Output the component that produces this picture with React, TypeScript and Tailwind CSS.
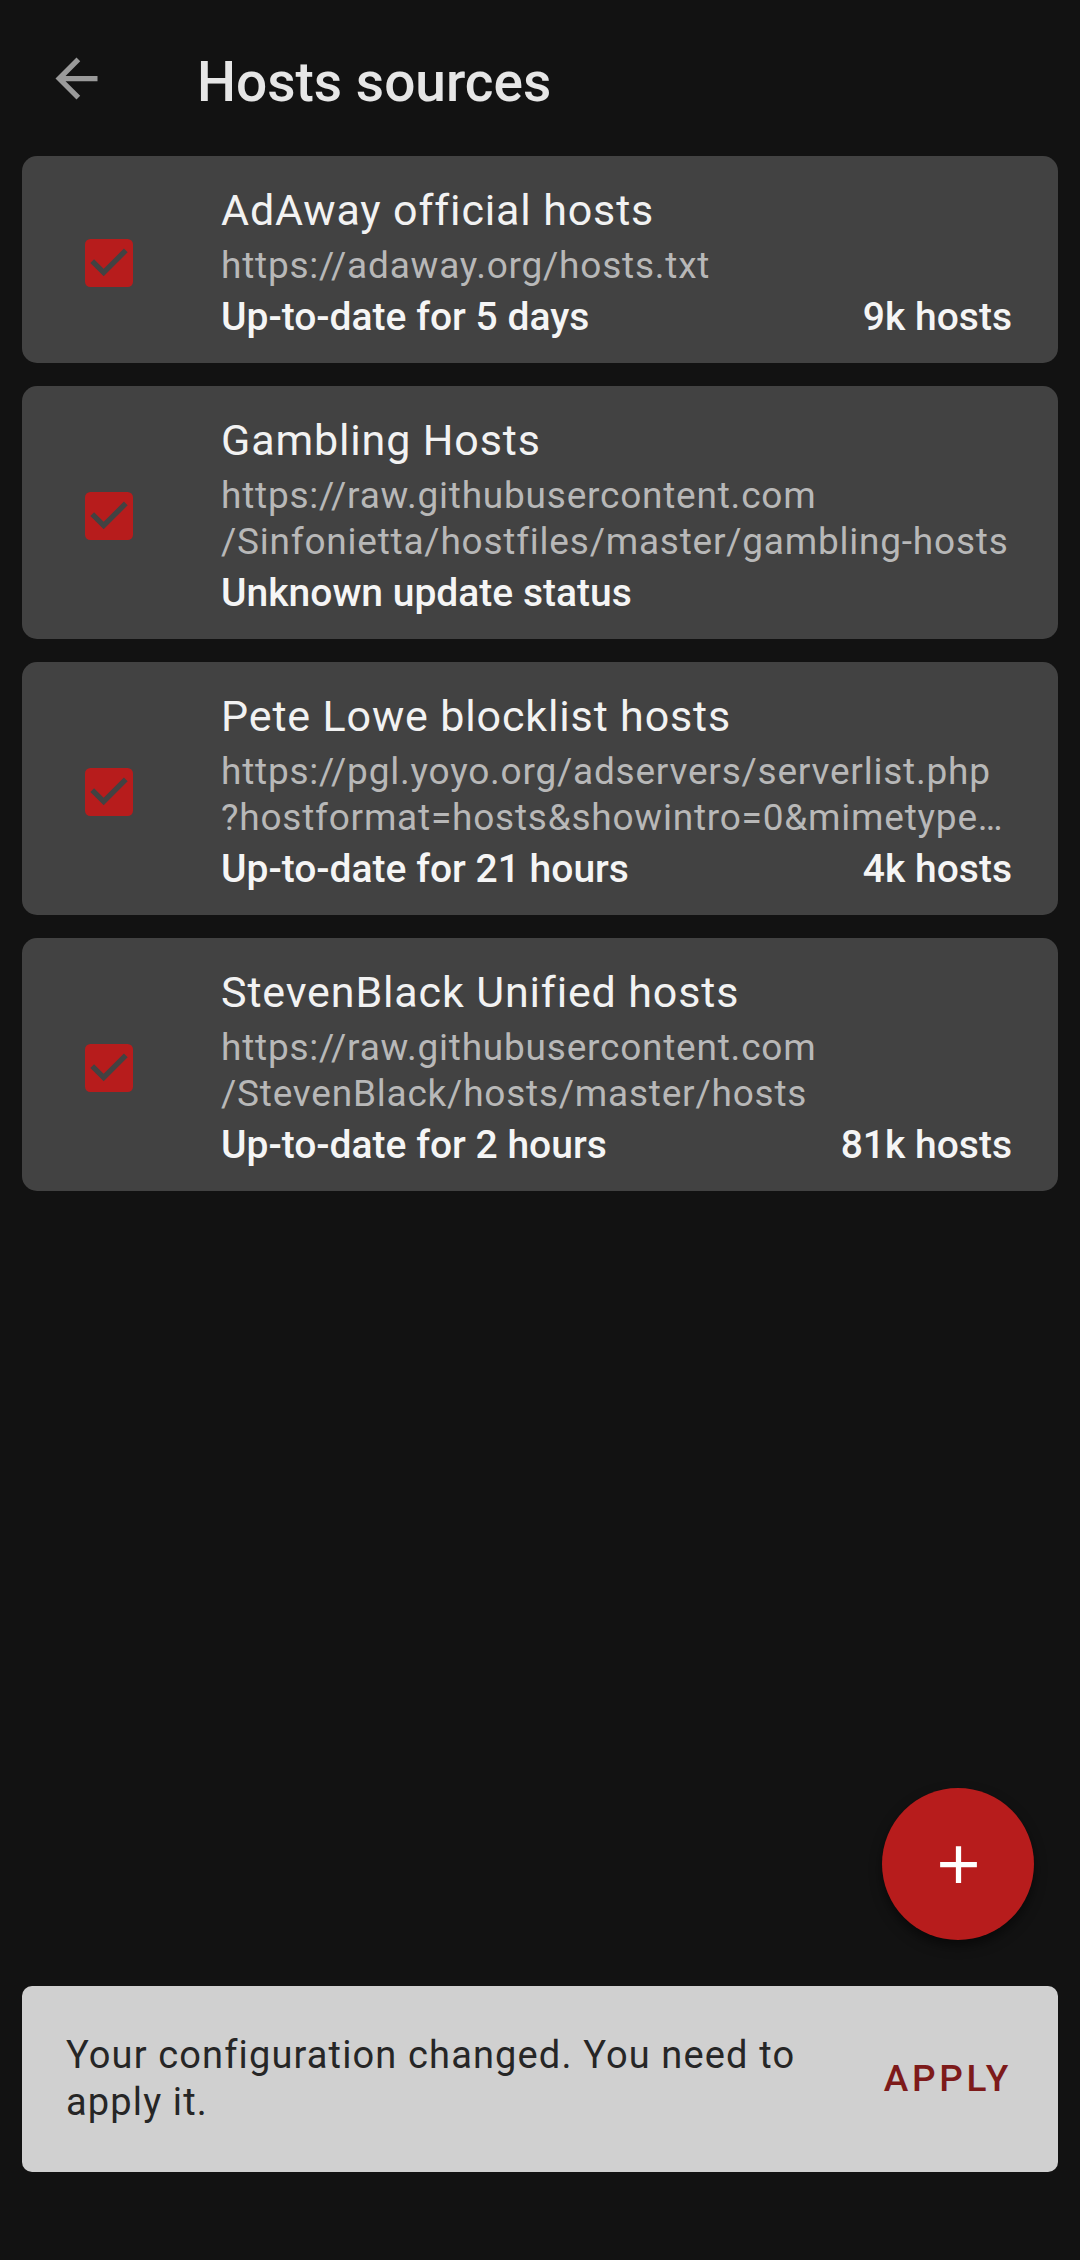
import React from "react";

type Source = {
  title: string;
  url: string[];
  status: string;
  count?: string;
};

const sources: Source[] = [
  {
    title: "AdAway official hosts",
    url: ["https://adaway.org/hosts.txt"],
    status: "Up-to-date for 5 days",
    count: "9k hosts",
  },
  {
    title: "Gambling Hosts",
    url: ["https://raw.githubusercontent.com", "/Sinfonietta/hostfiles/master/gambling-hosts"],
    status: "Unknown update status",
  },
  {
    title: "Pete Lowe blocklist hosts",
    url: [
      "https://pgl.yoyo.org/adservers/serverlist.php",
      "?hostformat=hosts&showintro=0&mimetype\u2026",
    ],
    status: "Up-to-date for 21 hours",
    count: "4k hosts",
  },
  {
    title: "StevenBlack Unified hosts",
    url: ["https://raw.githubusercontent.com", "/StevenBlack/hosts/master/hosts"],
    status: "Up-to-date for 2 hours",
    count: "81k hosts",
  },
];

function CheckBox() {
  return (
    <svg width="48" height="48" viewBox="3 3 18 18" className="shrink-0">
      <rect x="3" y="3" width="18" height="18" rx="2" fill="#b71c1c" />
      <path d="M10 17l-5-5 1.41-1.41L10 14.17l7.59-7.59L19 8l-9 9z" fill="#424242" />
    </svg>
  );
}

function Card({ s }: { s: Source }) {
  return (
    <div className="flex items-center rounded-[15px] bg-[#424242] pl-[63px] pr-[46px] pt-[30px] pb-[24px]">
      <CheckBox />
      <div className="ml-[88px] min-w-0 flex-1">
        <div className="text-[43px] leading-[48px] tracking-[0.02em] text-[#f2f2f2]">{s.title}</div>
        <div className="mt-[9px] text-[37px] leading-[46px] tracking-[0.021em] text-[#b8b8b8]">
          {s.url.map((u, i) => (
            <div key={i} className="whitespace-nowrap">
              {u}
            </div>
          ))}
        </div>
        <div className="mt-[6px] flex justify-between text-[39px] leading-[44px] font-medium text-[#f5f5f5]">
          <span>{s.status}</span>
          {s.count && <span>{s.count}</span>}
        </div>
      </div>
    </div>
  );
}

export default function App() {
  return (
    <div
      className="relative h-[2260px] w-[1080px] overflow-hidden bg-[#121212]"
      style={{ fontFamily: "Roboto, 'Noto Sans', sans-serif" }}
    >
      <header className="flex h-[156px] items-center">
        <svg width="63" height="63" viewBox="0 0 24 24" className="ml-[45px]">
          <path d="M20 11H7.83l5.59-5.59L12 4l-8 8 8 8 1.41-1.41L7.83 13H20v-2z" fill="#9a9a9a" />
        </svg>
        <h1 className="ml-[89px] pt-[8px] text-[55px] font-medium text-[#e6e6e6]">Hosts sources</h1>
      </header>

      <div className="flex flex-col gap-[23px] px-[22px]">
        {sources.map((s) => (
          <Card key={s.title} s={s} />
        ))}
      </div>

      <button className="absolute left-[882px] top-[1788px] flex h-[152px] w-[152px] items-center justify-center rounded-full bg-[#b71c1c] shadow-[0_6px_12px_rgba(0,0,0,0.5)]">
        <svg width="63" height="63" viewBox="0 0 24 24">
          <path d="M19 13h-6v6h-2v-6H5v-2h6V5h2v6h6v2z" fill="#ffffff" />
        </svg>
      </button>

      <div className="absolute left-[22px] right-[22px] top-[1986px] flex h-[186px] items-center justify-between rounded-[10px] bg-[#d0d0d0] pl-[44px] pr-[46px]">
        <div className="text-[38px] leading-[47px] tracking-[0.03em] text-[#262626]">
          Your configuration changed. You need to
          <br />
          apply it.
        </div>
        <div className="text-[37px] font-medium tracking-[0.1em] text-[#7d1a1a]">APPLY</div>
      </div>
    </div>
  );
}
